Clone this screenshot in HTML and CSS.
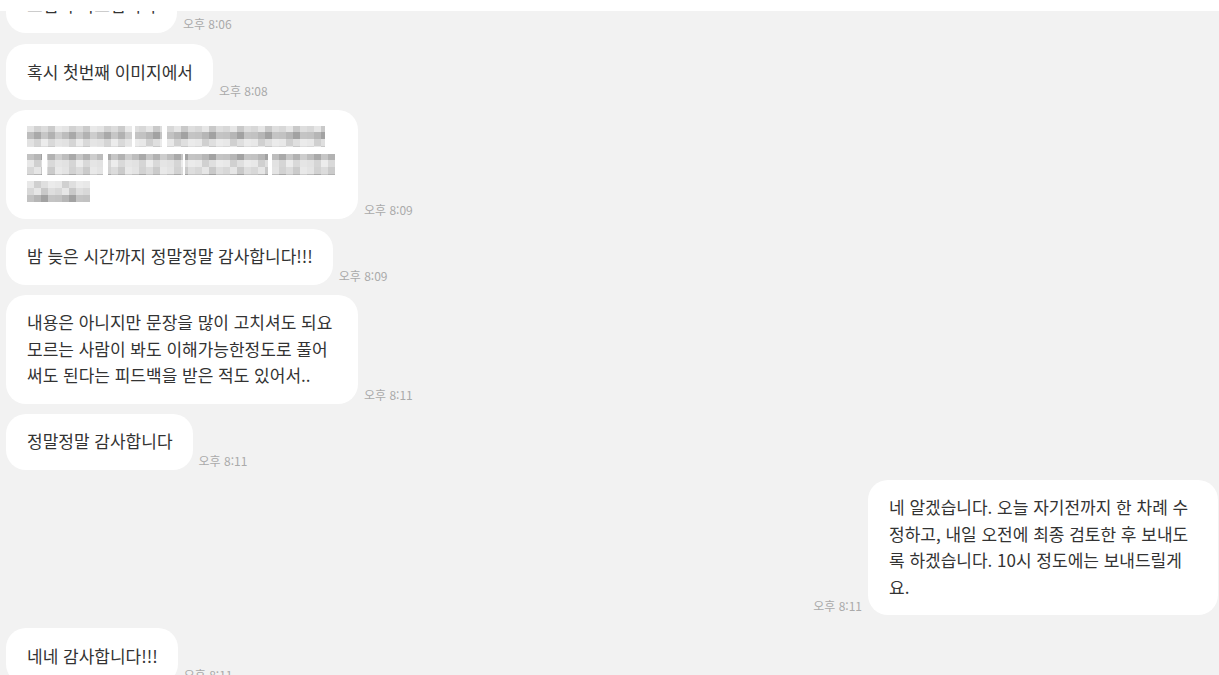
FILE: index.html
```html
<!DOCTYPE html>
<html lang="ko">
<head>
<meta charset="utf-8">
<title>채팅</title>
<link rel="stylesheet" href="styles.css">
</head>
<body>
<div class="topbar"></div>
<div class="chat">
  <div class="list">
    <div class="row">
      <div class="bubble">그럼 부탁드립니다</div>
      <div class="time">오후 8:06</div>
    </div>
    <div class="row">
      <div class="bubble">혹시 첫번째 이미지에서</div>
      <div class="time">오후 8:08</div>
    </div>
    <div class="row">
      <div class="bubble">
        <svg class="mosaic" width="311" height="79" viewBox="0 0 311 79" aria-label="가려진 메시지">
          <defs>
            <pattern id="mA" width="35" height="21" patternUnits="userSpaceOnUse">
              <rect x="0" y="0" width="7" height="7" fill="#e4e4e4"/>
              <rect x="7" y="0" width="7" height="7" fill="#d2d2d2"/>
              <rect x="14" y="0" width="7" height="7" fill="#dcdcdc"/>
              <rect x="21" y="0" width="7" height="7" fill="#cbcbcb"/>
              <rect x="28" y="0" width="7" height="7" fill="#e9e9e9"/>
              <rect x="0" y="7" width="7" height="7" fill="#bdbdbd"/>
              <rect x="7" y="7" width="7" height="7" fill="#a9a9a9"/>
              <rect x="14" y="7" width="7" height="7" fill="#c6c6c6"/>
              <rect x="21" y="7" width="7" height="7" fill="#b2b2b2"/>
              <rect x="28" y="7" width="7" height="7" fill="#cdcdcd"/>
              <rect x="0" y="14" width="7" height="7" fill="#e2e2e2"/>
              <rect x="7" y="14" width="7" height="7" fill="#d5d5d5"/>
              <rect x="14" y="14" width="7" height="7" fill="#ececec"/>
              <rect x="21" y="14" width="7" height="7" fill="#d9d9d9"/>
              <rect x="28" y="14" width="7" height="7" fill="#e5e5e5"/>
            </pattern>
            <pattern id="mB" width="28" height="21" patternUnits="userSpaceOnUse">
              <rect x="0" y="0" width="7" height="7" fill="#d8d8d8"/>
              <rect x="7" y="0" width="7" height="7" fill="#e6e6e6"/>
              <rect x="14" y="0" width="7" height="7" fill="#c9c9c9"/>
              <rect x="21" y="0" width="7" height="7" fill="#dedede"/>
              <rect x="0" y="7" width="7" height="7" fill="#c2c2c2"/>
              <rect x="7" y="7" width="7" height="7" fill="#b6b6b6"/>
              <rect x="14" y="7" width="7" height="7" fill="#a2a2a2"/>
              <rect x="21" y="7" width="7" height="7" fill="#c4c4c4"/>
              <rect x="0" y="14" width="7" height="7" fill="#e8e8e8"/>
              <rect x="7" y="14" width="7" height="7" fill="#d0d0d0"/>
              <rect x="14" y="14" width="7" height="7" fill="#dfdfdf"/>
              <rect x="21" y="14" width="7" height="7" fill="#ebebeb"/>
            </pattern>
          </defs>
          <rect x="0" y="1" width="105" height="21" fill="url(#mA)"/>
          <rect x="108" y="1" width="27" height="21" fill="url(#mB)"/>
          <rect x="140" y="1" width="158" height="21" fill="url(#mB)"/>
          <rect x="0" y="29" width="15" height="21" fill="url(#mB)"/>
          <rect x="20" y="29" width="56" height="21" fill="url(#mA)"/>
          <rect x="81" y="29" width="75" height="21" fill="url(#mA)"/>
          <rect x="158" y="29" width="83" height="21" fill="url(#mB)"/>
          <rect x="245" y="29" width="63" height="21" fill="url(#mA)"/>
          <rect x="0" y="56" width="63" height="21" fill="url(#mB)"/>
        </svg>
      </div>
      <div class="time">오후 8:09</div>
    </div>
    <div class="row">
      <div class="bubble">밤 늦은 시간까지 정말정말 감사합니다!!!</div>
      <div class="time">오후 8:09</div>
    </div>
    <div class="row">
      <div class="bubble">내용은 아니지만 문장을 많이 고치셔도 되요 모르는 사람이 봐도 이해가능한정도로 풀어 써도 된다는 피드백을 받은 적도 있어서..</div>
      <div class="time">오후 8:11</div>
    </div>
    <div class="row">
      <div class="bubble">정말정말 감사합니다</div>
      <div class="time">오후 8:11</div>
    </div>
    <div class="row me">
      <div class="time">오후 8:11</div>
      <div class="bubble">네 알겠습니다. 오늘 자기전까지 한 차례 수정하고, 내일 오전에 최종 검토한 후 보내도록 하겠습니다. 10시 정도에는 보내드릴게요.</div>
    </div>
    <div class="row after-me">
      <div class="bubble">네네 감사합니다!!!</div>
      <div class="time">오후 8:11</div>
    </div>
  </div>
</div>
</body>
</html>
```

FILE: styles.css
```css
html, body {
  margin: 0;
  padding: 0;
  background: #ffffff;
}

body {
  font-family: "Noto Sans CJK KR", "Noto Sans", sans-serif;
  color: #333333;
  overflow: hidden;
}

.topbar {
  height: 11px;
  background: #ffffff;
}

.chat {
  background: #f2f2f2;
  height: 664px;
  overflow: hidden;
  padding: 0 1px 0 6px;
}

.list {
  display: flex;
  flex-direction: column;
  gap: 10px;
  margin-top: -34px;
}

.row {
  display: flex;
  align-items: flex-end;
  gap: 6px;
}

.row:first-child {
  margin-bottom: 1px;
}

.row.me {
  justify-content: flex-end;
}

.row.me .bubble {
  max-width: 350px;
}

.row.after-me {
  margin-top: 3px;
}

.bubble {
  background: #ffffff;
  border-radius: 20px;
  padding: 14.75px 20px 14.75px 21px;
  max-width: 352px;
  box-sizing: border-box;
  font-size: 17px;
  line-height: 26.5px;
  color: #333333;
}

.mosaic {
  display: block;
}

.time {
  font-size: 12px;
  line-height: 16px;
  color: #aaaaaa;
  margin-bottom: 1px;
  white-space: nowrap;
  flex-shrink: 0;
}
```
